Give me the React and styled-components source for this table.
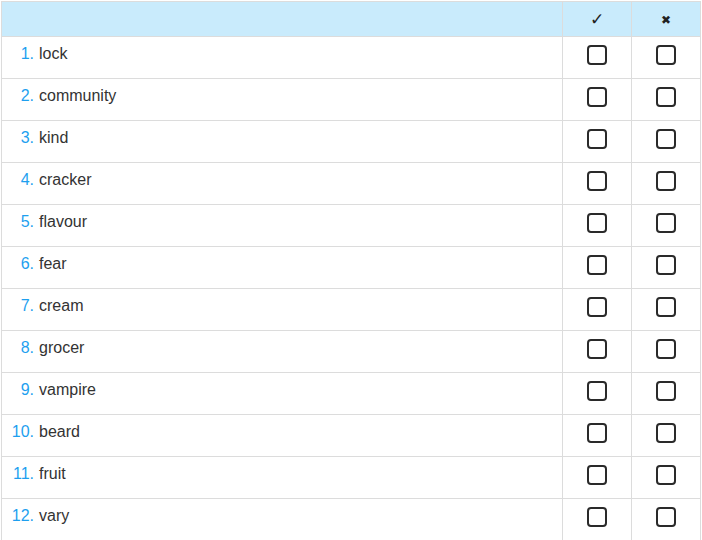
import React from "react"
import styled, { createGlobalStyle } from "styled-components"

const GlobalStyle = createGlobalStyle`
    body {
        margin: 0;
        background: #fff;
        font-family: "Liberation Sans", Arial, sans-serif;
        color: #333;
    }
`

const Page = styled.div`
    padding: 1px 0 0 1px;
`

const Table = styled.div`
    width: 700px;
    box-sizing: border-box;
    border: 1px solid #dcdcdc;
    border-bottom: none;
`

const Row = styled.div`
    display: grid;
    grid-template-columns: 560px 69px 69px;
    height: ${p => (p.$head ? "35px" : "42px")};
    box-sizing: border-box;
    border-bottom: 1px solid #dcdcdc;
    background: ${p => (p.$head ? "#c9ebfc" : "#fff")};
`

const Cell = styled.div`
    display: flex;
    align-items: ${p => (p.$head ? "center" : "flex-start")};
    justify-content: ${p => (p.$center ? "center" : "flex-start")};
    padding-top: ${p => (p.$head ? "0" : p.$center ? "8px" : "7px")};
    box-sizing: border-box;
    border-left: ${p => (p.$first ? "none" : "1px solid #dcdcdc")};
`

const Num = styled.span`
    width: 24px;
    margin-left: 8px;
    margin-right: 5px;
    text-align: right;
    font-size: 16px;
    line-height: 19px;
    color: #1e9fef;
`

const Word = styled.span`
    font-size: 16px;
    line-height: 19px;
    color: #333;
`

const HeadMark = styled.span`
    font-family: "DejaVu Sans", sans-serif;
    font-size: ${p => p.$size};
    color: #222;
    line-height: 1;
    margin-top: 1px;
`

const Box = styled.span`
    display: block;
    width: 20px;
    height: 20px;
    box-sizing: border-box;
    border: 2px solid #2a2a2a;
    border-radius: 4px;
    background: #fff;
`

const words = [
    "lock", "community", "kind", "cracker", "flavour", "fear",
    "cream", "grocer", "vampire", "beard", "fruit", "vary"
]

export default function App() {
    return (
        <Page>
            <GlobalStyle />
            <Table>
                <Row $head>
                    <Cell $head $first />
                    <Cell $head $center><HeadMark $size="17px">✓</HeadMark></Cell>
                    <Cell $head $center><HeadMark $size="12px">✖</HeadMark></Cell>
                </Row>
                {words.map((w, i) => (
                    <Row key={w}>
                        <Cell $first>
                            <Num>{i + 1}.</Num>
                            <Word>{w}</Word>
                        </Cell>
                        <Cell $center><Box /></Cell>
                        <Cell $center><Box /></Cell>
                    </Row>
                ))}
            </Table>
        </Page>
    )
}
